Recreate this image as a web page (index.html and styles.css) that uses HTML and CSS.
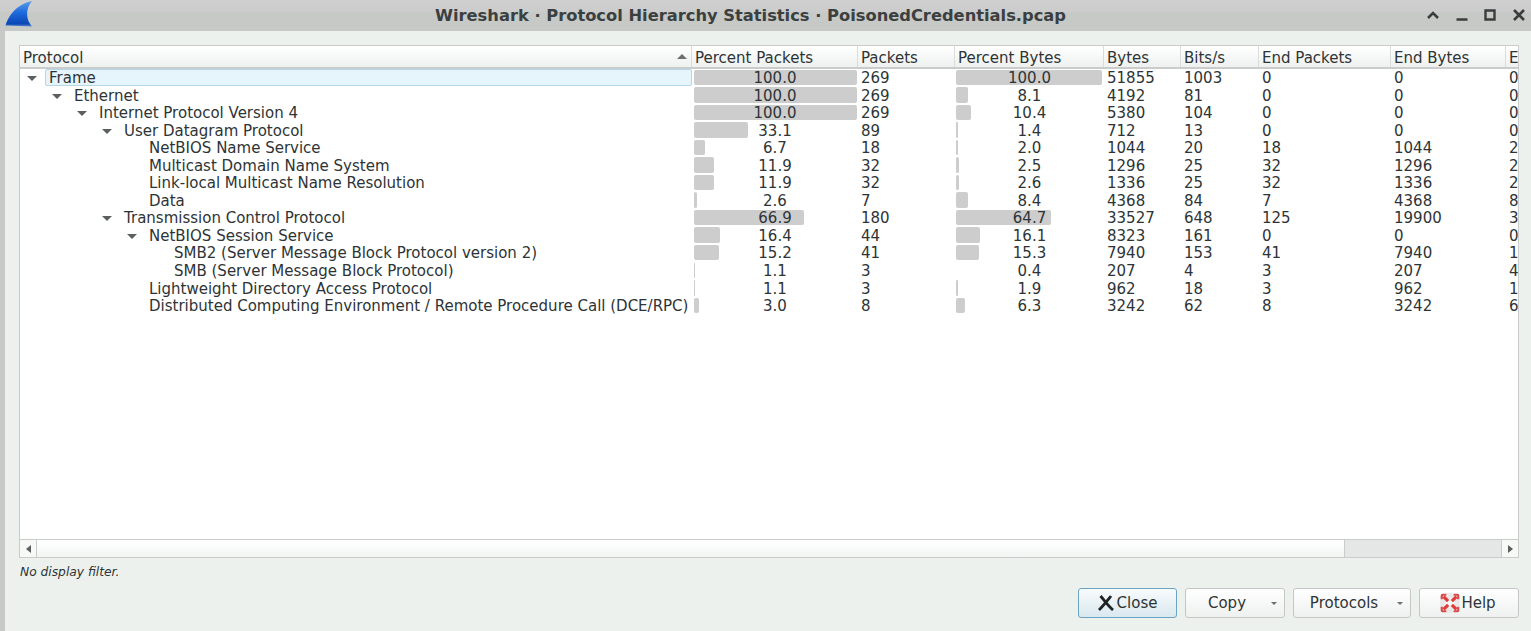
FILE: index.html
```html
<!DOCTYPE html>
<html lang="en">
<head>
    <meta charset="UTF-8">
    <title>Wireshark · Protocol Hierarchy Statistics · PoisonedCredentials.pcap</title>
    <link rel="stylesheet" href="styles.css">
</head>
<body>
    <div class="titlebar">
        <svg class="shark" viewBox="0 0 28 28" width="28" height="28">
            <defs>
                <linearGradient id="fin" x1="0" y1="0" x2="0" y2="1">
                    <stop offset="0" stop-color="#5c9fe8"/>
                    <stop offset="0.45" stop-color="#1e6ade"/>
                    <stop offset="0.9" stop-color="#0b46b4"/>
                    <stop offset="1" stop-color="#5f8ccf"/>
                </linearGradient>
            </defs>
            <path d="M27 1 C18 3 6 9 0.5 25.5 L27 26.5 C21 20 20 9 27 1 Z" fill="url(#fin)"/>
        </svg>
        <span class="title">Wireshark · Protocol Hierarchy Statistics · PoisonedCredentials.pcap</span>
        <div class="win-buttons">
            <svg viewBox="0 0 12 12" width="12" height="12"><path d="M1 9 L6 4 L11 9" fill="none" stroke="#3a3d3e" stroke-width="2.5"/></svg>
            <svg viewBox="0 0 12 12" width="12" height="12"><path d="M0.5 10.5 H11.5" fill="none" stroke="#3a3d3e" stroke-width="2.5"/></svg>
            <svg viewBox="0 0 12 12" width="12" height="12"><path d="M1.5 1.5 H10.5 V10.5 H1.5 Z" fill="none" stroke="#3a3d3e" stroke-width="2.4"/></svg>
            <svg viewBox="0 0 12 12" width="12" height="12"><path d="M1 1 L11 11 M11 1 L1 11" fill="none" stroke="#3a3d3e" stroke-width="2.6"/></svg>
        </div>
    </div>

    <div class="content">
        <div class="tree-frame">
            <div class="tree-scroll">
                <div class="row head">
                    <div class="c proto">Protocol<span class="sort"></span></div>
                    <div class="c">Percent Packets</div>
                    <div class="c">Packets</div>
                    <div class="c">Percent Bytes</div>
                    <div class="c">Bytes</div>
                    <div class="c">Bits/s</div>
                    <div class="c">End Packets</div>
                    <div class="c">End Bytes</div>
                    <div class="c">E</div>
                </div>
                <div class="row">
                    <div class="c proto l0"><i class="arrow"></i><span class="current">Frame</span></div>
                    <div class="c pct"><b style="width:163px"></b><span>100.0</span></div><div class="c">269</div>
                    <div class="c pct bytes"><b style="width:146px"></b><span>100.0</span></div><div class="c">51855</div>
                    <div class="c">1003</div><div class="c">0</div><div class="c">0</div><div class="c">0</div>
                </div>
                <div class="row">
                    <div class="c proto l1"><i class="arrow"></i>Ethernet</div>
                    <div class="c pct"><b style="width:163px"></b><span>100.0</span></div><div class="c">269</div>
                    <div class="c pct bytes"><b style="width:12px"></b><span>8.1</span></div><div class="c">4192</div>
                    <div class="c">81</div><div class="c">0</div><div class="c">0</div><div class="c">0</div>
                </div>
                <div class="row">
                    <div class="c proto l2"><i class="arrow"></i>Internet Protocol Version 4</div>
                    <div class="c pct"><b style="width:163px"></b><span>100.0</span></div><div class="c">269</div>
                    <div class="c pct bytes"><b style="width:15px"></b><span>10.4</span></div><div class="c">5380</div>
                    <div class="c">104</div><div class="c">0</div><div class="c">0</div><div class="c">0</div>
                </div>
                <div class="row">
                    <div class="c proto l3"><i class="arrow"></i>User Datagram Protocol</div>
                    <div class="c pct"><b style="width:54px"></b><span>33.1</span></div><div class="c">89</div>
                    <div class="c pct bytes"><b style="width:2px"></b><span>1.4</span></div><div class="c">712</div>
                    <div class="c">13</div><div class="c">0</div><div class="c">0</div><div class="c">0</div>
                </div>
                <div class="row">
                    <div class="c proto l4">NetBIOS Name Service</div>
                    <div class="c pct"><b style="width:11px"></b><span>6.7</span></div><div class="c">18</div>
                    <div class="c pct bytes"><b style="width:2px"></b><span>2.0</span></div><div class="c">1044</div>
                    <div class="c">20</div><div class="c">18</div><div class="c">1044</div><div class="c">2</div>
                </div>
                <div class="row">
                    <div class="c proto l4">Multicast Domain Name System</div>
                    <div class="c pct"><b style="width:20px"></b><span>11.9</span></div><div class="c">32</div>
                    <div class="c pct bytes"><b style="width:3px"></b><span>2.5</span></div><div class="c">1296</div>
                    <div class="c">25</div><div class="c">32</div><div class="c">1296</div><div class="c">2</div>
                </div>
                <div class="row">
                    <div class="c proto l4">Link-local Multicast Name Resolution</div>
                    <div class="c pct"><b style="width:20px"></b><span>11.9</span></div><div class="c">32</div>
                    <div class="c pct bytes"><b style="width:3px"></b><span>2.6</span></div><div class="c">1336</div>
                    <div class="c">25</div><div class="c">32</div><div class="c">1336</div><div class="c">2</div>
                </div>
                <div class="row">
                    <div class="c proto l4">Data</div>
                    <div class="c pct"><b style="width:3px"></b><span>2.6</span></div><div class="c">7</div>
                    <div class="c pct bytes"><b style="width:12px"></b><span>8.4</span></div><div class="c">4368</div>
                    <div class="c">84</div><div class="c">7</div><div class="c">4368</div><div class="c">8</div>
                </div>
                <div class="row">
                    <div class="c proto l3"><i class="arrow"></i>Transmission Control Protocol</div>
                    <div class="c pct"><b style="width:110px"></b><span>66.9</span></div><div class="c">180</div>
                    <div class="c pct bytes"><b style="width:95px"></b><span>64.7</span></div><div class="c">33527</div>
                    <div class="c">648</div><div class="c">125</div><div class="c">19900</div><div class="c">3</div>
                </div>
                <div class="row">
                    <div class="c proto l4"><i class="arrow"></i>NetBIOS Session Service</div>
                    <div class="c pct"><b style="width:26px"></b><span>16.4</span></div><div class="c">44</div>
                    <div class="c pct bytes"><b style="width:24px"></b><span>16.1</span></div><div class="c">8323</div>
                    <div class="c">161</div><div class="c">0</div><div class="c">0</div><div class="c">0</div>
                </div>
                <div class="row">
                    <div class="c proto l5">SMB2 (Server Message Block Protocol version 2)</div>
                    <div class="c pct"><b style="width:25px"></b><span>15.2</span></div><div class="c">41</div>
                    <div class="c pct bytes"><b style="width:23px"></b><span>15.3</span></div><div class="c">7940</div>
                    <div class="c">153</div><div class="c">41</div><div class="c">7940</div><div class="c">1</div>
                </div>
                <div class="row">
                    <div class="c proto l5">SMB (Server Message Block Protocol)</div>
                    <div class="c pct"><b style="width:1px"></b><span>1.1</span></div><div class="c">3</div>
                    <div class="c pct bytes"><span>0.4</span></div><div class="c">207</div>
                    <div class="c">4</div><div class="c">3</div><div class="c">207</div><div class="c">4</div>
                </div>
                <div class="row">
                    <div class="c proto l4">Lightweight Directory Access Protocol</div>
                    <div class="c pct"><b style="width:1px"></b><span>1.1</span></div><div class="c">3</div>
                    <div class="c pct bytes"><b style="width:2px"></b><span>1.9</span></div><div class="c">962</div>
                    <div class="c">18</div><div class="c">3</div><div class="c">962</div><div class="c">1</div>
                </div>
                <div class="row">
                    <div class="c proto l4">Distributed Computing Environment / Remote Procedure Call (DCE/RPC)</div>
                    <div class="c pct"><b style="width:5px"></b><span>3.0</span></div><div class="c">8</div>
                    <div class="c pct bytes"><b style="width:9px"></b><span>6.3</span></div><div class="c">3242</div>
                    <div class="c">62</div><div class="c">8</div><div class="c">3242</div><div class="c">6</div>
                </div>
            </div>
            <div class="hscroll">
                <div class="step"><i class="tri-left"></i></div>
                <div class="thumb"></div>
                <div class="trough"></div>
                <div class="step end"><i class="tri-right"></i></div>
            </div>
        </div>

        <div class="filter-note">No display filter.</div>

        <div class="buttons">
            <button class="btn btn-close" type="button">
                <svg viewBox="0 0 16 16" width="16" height="16"><path d="M2.5 1 C6 5 10 11 15 15 M13 1 C9 6 6 10 1 15" fill="none" stroke="#1f2324" stroke-width="2.8"/></svg>
                Close
            </button>
            <button class="btn btn-menu btn-copy" type="button"><span>Copy</span><i class="menu-arrow"></i></button>
            <button class="btn btn-menu btn-protocols" type="button"><span>Protocols</span><i class="menu-arrow"></i></button>
            <button class="btn btn-help" type="button">
                <svg viewBox="0 0 24 24" width="22" height="22">
                    <circle cx="12" cy="12" r="8" fill="none" stroke="#e8e8e8" stroke-width="6"/>
                    <path d="M3 8 V4 a1 1 0 0 1 1 -1 H8 M16 3 H20 a1 1 0 0 1 1 1 V8 M21 16 V20 a1 1 0 0 1 -1 1 H16 M8 21 H4 a1 1 0 0 1 -1 -1 V16" fill="none" stroke="#d94a4a" stroke-width="2.4"/>
                    <path d="M5 5 L10 10 M19 5 L14 10 M19 19 L14 14 M5 19 L10 14" stroke="#e33b3b" stroke-width="3.4"/>
                </svg>
                Help
            </button>
        </div>
    </div>
</body>
</html>
```

FILE: styles.css
```css
* {
    box-sizing: border-box;
}

html, body {
    height: 100%;
}

body {
    margin: 0;
    overflow: hidden;
    display: flex;
    flex-direction: column;
    font-family: "DejaVu Sans", sans-serif;
    font-size: 15px;
    color: #2e3436;
    background-color: #edf1ee;
}

.titlebar {
    height: 31px;
    flex: none;
    display: flex;
    align-items: center;
    justify-content: center;
    position: relative;
    background: linear-gradient(#cfcfcf 0, #cbcccb 12px, #c6c9c6 13px, #c6c9c6 100%);
}

.shark {
    position: absolute;
    left: 5px;
    top: 0;
}

.title {
    margin-right: 30px;
    font-weight: bold;
    font-size: 16.3px;
    color: #3b3f40;
}

.win-buttons {
    position: absolute;
    right: 6px;
    top: 9px;
    display: flex;
    gap: 16.6px;
}

.content {
    flex: 1;
    display: flex;
    flex-direction: column;
    padding: 14px 12px 14px 14px;
    border-left: 5px solid #c6c9c6;
}

.tree-frame {
    height: 513px;
    flex: none;
    display: flex;
    flex-direction: column;
    border: 1px solid #c9cccb;
    background-color: #fff;
}

.tree-scroll {
    flex: 1;
    overflow: hidden;
}

.row {
    display: grid;
    grid-template-columns: 672px 166px 97px 149px 77px 78px 132px 115px 40px;
    height: 17.55px;
    line-height: 19px;
    white-space: nowrap;
}

.row.head {
    height: 23px;
    line-height: 24px;
    background: linear-gradient(#ffffff, #eef1ef);
    border-bottom: 2px solid #c9cccb;
}

.head .c {
    padding-left: 3px;
    border-right: 1px solid #d9dcda;
}

.c {
    padding-left: 3px;
    position: relative;
    overflow: hidden;
}

.sort {
    position: absolute;
    right: 4px;
    top: 8px;
    border-left: 5px solid transparent;
    border-right: 5px solid transparent;
    border-bottom: 5px solid #6b6f70;
}

.proto {
    display: block;
}

.l0 { padding-left: 29px; }
.l1 { padding-left: 54px; }
.l2 { padding-left: 79px; }
.l3 { padding-left: 104px; }
.l4 { padding-left: 129px; }
.l5 { padding-left: 154px; }

.arrow {
    position: absolute;
    margin-left: -22px;
    top: 7px;
    border-left: 5px solid transparent;
    border-right: 5px solid transparent;
    border-top: 5px solid #5b5f60;
}

.current {
    position: absolute;
    left: 25px;
    right: 0;
    top: 0;
    height: 17px;
    padding-left: 3px;
    border: 1px solid #b5d6e8;
    line-height: 16px;
    border-radius: 2px;
    background-color: #e6f4fb;
}

.pct {
    padding: 0 2px;
    text-align: center;
}

.pct b {
    position: absolute;
    left: 2px;
    top: 0.5px;
    height: 15.5px;
    border-radius: 2px;
    background-color: #cdcdcd;
}

.pct.bytes b {
    left: 1px;
}

.pct span {
    position: relative;
}

.hscroll {
    height: 18px;
    flex: none;
    display: flex;
    border-top: 1px solid #c9cccb;
}

.step {
    width: 17px;
    flex: none;
    display: flex;
    align-items: center;
    justify-content: center;
    background-color: #f7f9f7;
    border-right: 1px solid #c9cccb;
}

.step.end {
    border-right: 0;
    border-left: 1px solid #c9cccb;
}

.tri-left {
    border-top: 4px solid transparent;
    border-bottom: 4px solid transparent;
    border-right: 5px solid #5b5f60;
}

.tri-right {
    border-top: 4px solid transparent;
    border-bottom: 4px solid transparent;
    border-left: 5px solid #5b5f60;
}

.thumb {
    width: 1308px;
    flex: none;
    background: linear-gradient(#ffffff, #f2f5f3);
    border-right: 1px solid #c9cccb;
}

.trough {
    flex: 1;
    background-color: #e4e7e5;
}

.filter-note {
    margin-top: 6px;
    padding-left: 1px;
    font-size: 12.25px;
    font-style: italic;
    line-height: 16px;
}

.buttons {
    margin-top: 8px;
    display: flex;
    justify-content: flex-end;
    gap: 8px;
}

.btn {
    height: 30px;
    padding: 0;
    font-family: inherit;
    font-size: 15px;
    color: #2e3436;
    display: flex;
    align-items: center;
    justify-content: center;
    gap: 3px;
    border: 1px solid #c4c7c5;
    border-radius: 3px;
    background: linear-gradient(#ffffff, #eef1ef);
}

.btn-close {
    width: 99px;
    border-color: #6aa5c4;
    background: linear-gradient(#f8fbfc, #d9e8ef);
}

.btn-menu {
    position: relative;
}

.btn-copy {
    width: 100px;
    padding-right: 16px;
}

.btn-protocols {
    width: 118px;
    padding-right: 16px;
}

.menu-arrow {
    position: absolute;
    right: 7px;
    top: 13px;
    border-left: 3.5px solid transparent;
    border-right: 3.5px solid transparent;
    border-top: 3.5px solid #6b6f70;
}

.btn-help {
    width: 100px;
    padding-right: 3px;
    gap: 0;
}
```
